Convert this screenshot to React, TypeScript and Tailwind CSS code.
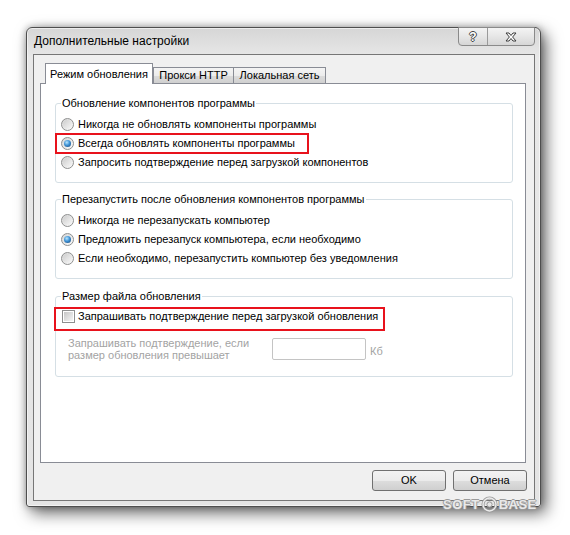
import React from "react";

function Radio({ checked }: { checked?: boolean }) {
  return (
    <span className="flex h-[13px] w-[13px] shrink-0 items-center justify-center rounded-full border border-[#8e8f8f] bg-[linear-gradient(135deg,#d4d4d4,#fbfbfb)]">
      {checked ? (
        <span className="h-[7px] w-[7px] rounded-full bg-[radial-gradient(circle_at_40%_35%,#b8e6ff_0%,#3f93d6_45%,#123f70_100%)]" />
      ) : (
        <span className="h-[9px] w-[9px] rounded-full bg-[linear-gradient(135deg,#cdcdcd,#f8f8f8)]" />
      )}
    </span>
  );
}

function Checkbox() {
  return (
    <span className="flex h-[13px] w-[13px] shrink-0 items-center justify-center border border-[#8e8f8f] bg-white">
      <span className="h-[9px] w-[9px] bg-[linear-gradient(135deg,#c6c6c6,#f6f6f6)]" />
    </span>
  );
}

function RadioRow({ text, checked, children }: { text: string; checked?: boolean; children?: React.ReactNode }) {
  return (
    <div className="relative flex h-[19px] items-center gap-[4px]">
      <Radio checked={checked} />
      <span className="whitespace-nowrap">{text}</span>
      {children}
    </div>
  );
}

function Group({ title, className, children }: { title: string; className?: string; children: React.ReactNode }) {
  return (
    <fieldset className={"rounded-[3px] border border-[#d5dfe5] px-[5px] " + (className ?? "")}>
      <legend className="px-[1px] leading-[13px]">{title}</legend>
      {children}
    </fieldset>
  );
}

export default function App() {
  return (
    <div className="relative h-[535px] w-[570px] overflow-hidden bg-white pl-[26px] pt-[27px] font-['Liberation_Sans',Arial,sans-serif] text-[11px] text-black">
      {/* window */}
      <div className="flex h-[480px] w-[515px] flex-col rounded-t-[6px] rounded-b-[3px] border border-[#4e4e4e] bg-[linear-gradient(180deg,#d6d6d6,#e8e8e8_30px,#e4e4e4)] pl-[6px] pr-[5px] pb-[5px] shadow-[5px_6px_16px_rgba(0,0,0,0.6),0_0_7px_rgba(0,0,0,0.3),inset_0_0_0_1px_rgba(255,255,255,0.55)]">
        {/* title bar */}
        <div className="flex h-[26px] items-start justify-between">
          <div className="flex h-[26px] items-center pl-[1px] text-[12px] text-black">Дополнительные настройки</div>
          <div className="-mt-px flex h-[19px] overflow-hidden rounded-b-[4px] border border-[#8a8a8a] bg-[linear-gradient(180deg,#f4f4f4,#e6e6e6_50%,#d6d6d6)]">
            <div className="flex w-[29px] items-center justify-center border-r border-[#9a9a9a]">
              <span className="text-[12px] font-bold leading-none text-white [text-shadow:1px_0_0_#444,-1px_0_0_#444,0_1px_0_#444,0_-1px_0_#444]">?</span>
            </div>
            <div className="flex w-[46px] items-center justify-center">
              <svg width="12" height="10" viewBox="0 0 12 10">
                <path d="M1 1 H4 L6 3.5 L8 1 H11 L7.6 5 L11 9 H8 L6 6.5 L4 9 H1 L4.4 5 Z" fill="#ffffff" stroke="#3d3d3d" strokeWidth="1" strokeLinejoin="round" />
              </svg>
            </div>
          </div>
        </div>

        {/* client area */}
        <div className="flex h-[447px] w-[502px] flex-col border border-[#767676] bg-[#f0f0f0] pl-[6px] pr-[8px] pt-[8px]">
          {/* tabs */}
          <div className="flex h-[20px] items-end pl-[5px]">
            <div className="relative z-10 -mb-px flex h-[21px] w-[108px] items-center justify-center border border-b-0 border-[#898c95] bg-white">
              Режим обновления
            </div>
            <div className="flex h-[16px] w-[81px] items-center justify-center border border-b-0 border-[#898c95] bg-[linear-gradient(180deg,#f4f4f4,#ececec_50%,#dcdcdc_51%,#d0d0d0)]">
              Прокси HTTP
            </div>
            <div className="-ml-px flex h-[16px] w-[93px] items-center justify-center border border-b-0 border-[#898c95] bg-[linear-gradient(180deg,#f4f4f4,#ececec_50%,#dcdcdc_51%,#d0d0d0)]">
              Локальная сеть
            </div>
          </div>

          {/* panel */}
          <div className="h-[380px] border border-[#898c95] bg-white pl-[14px] pr-[12px] pt-[13px]">
            <Group title="Обновление компонентов программы" className="pt-[5px] pb-[10px]">
              <RadioRow text="Никогда не обновлять компоненты программы" />
              <RadioRow text="Всегда обновлять компоненты программы" checked>
                <div className="absolute -left-[6px] -top-px h-[21px] w-[254px] border-2 border-[#e8121c]" />
              </RadioRow>
              <RadioRow text="Запросить подтверждение перед загрузкой компонентов" />
            </Group>

            <Group title="Перезапустить после обновления компонентов программы" className="mt-[10px] pt-[5px] pb-[10px]">
              <RadioRow text="Никогда не перезапускать компьютер" />
              <RadioRow text="Предложить перезапуск компьютера, если необходимо" checked />
              <RadioRow text="Если необходимо, перезапустить компьютер без уведомления" />
            </Group>

            <Group title="Размер файла обновления" className="mt-[11px] pt-[4px] pb-[15px]">
              <div className="relative flex h-[19px] items-center gap-[3px] pl-[1px]">
                <Checkbox />
                <span className="whitespace-nowrap">Запрашивать подтверждение перед загрузкой обновления</span>
                <div className="absolute -left-[7px] top-0 h-[24px] w-[331px] border-2 border-[#e8121c]" />
              </div>
              <div className="mt-[11px] flex items-center text-[#a3a3a3]">
                <div className="ml-[7px] w-[204px] leading-[12px]">
                  Запрашивать подтверждение, если
                  <br />
                  размер обновления превышает
                </div>
                <div className="h-[22px] w-[94px] rounded-[2px] border border-[#c4c4c4] bg-white" />
                <span className="ml-[4px] mt-[4px]">Кб</span>
              </div>
            </Group>
          </div>

          {/* buttons */}
          <div className="-mr-px mt-[7px] flex justify-end gap-[7px]">
            <button className="flex h-[21px] w-[74px] items-center justify-center rounded-[3px] border border-[#707070] bg-[linear-gradient(180deg,#f2f2f2,#ebebeb_50%,#dddddd_51%,#cfcfcf)] text-[11px]">
              OK
            </button>
            <button className="flex h-[21px] w-[74px] items-center justify-center rounded-[3px] border border-[#707070] bg-[linear-gradient(180deg,#f2f2f2,#ebebeb_50%,#dddddd_51%,#cfcfcf)] text-[11px]">
              Отмена
            </button>
          </div>
        </div>
      </div>

      {/* watermark */}
      <div className="absolute left-[443px] top-[495px] flex items-center text-[13px] font-bold tracking-[0.5px] text-[#e9e9e9] [text-shadow:1px_0_0_#9a9a9a,-1px_0_0_#9a9a9a,0_1px_0_#9a9a9a,0_-1px_0_#9a9a9a]">
        <span>SOFT</span>
        <svg width="17" height="17" viewBox="0 0 17 17" className="mx-[1px]">
          <circle cx="8.5" cy="8.5" r="6.5" fill="none" stroke="#9a9a9a" strokeWidth="3" />
          <circle cx="8.5" cy="8.5" r="6.5" fill="none" stroke="#ececec" strokeWidth="1.4" />
          <circle cx="8.5" cy="8.5" r="2.6" fill="#e6e6e6" stroke="#9a9a9a" strokeWidth="1" />
        </svg>
        <span>BASE</span>
      </div>
    </div>
  );
}
